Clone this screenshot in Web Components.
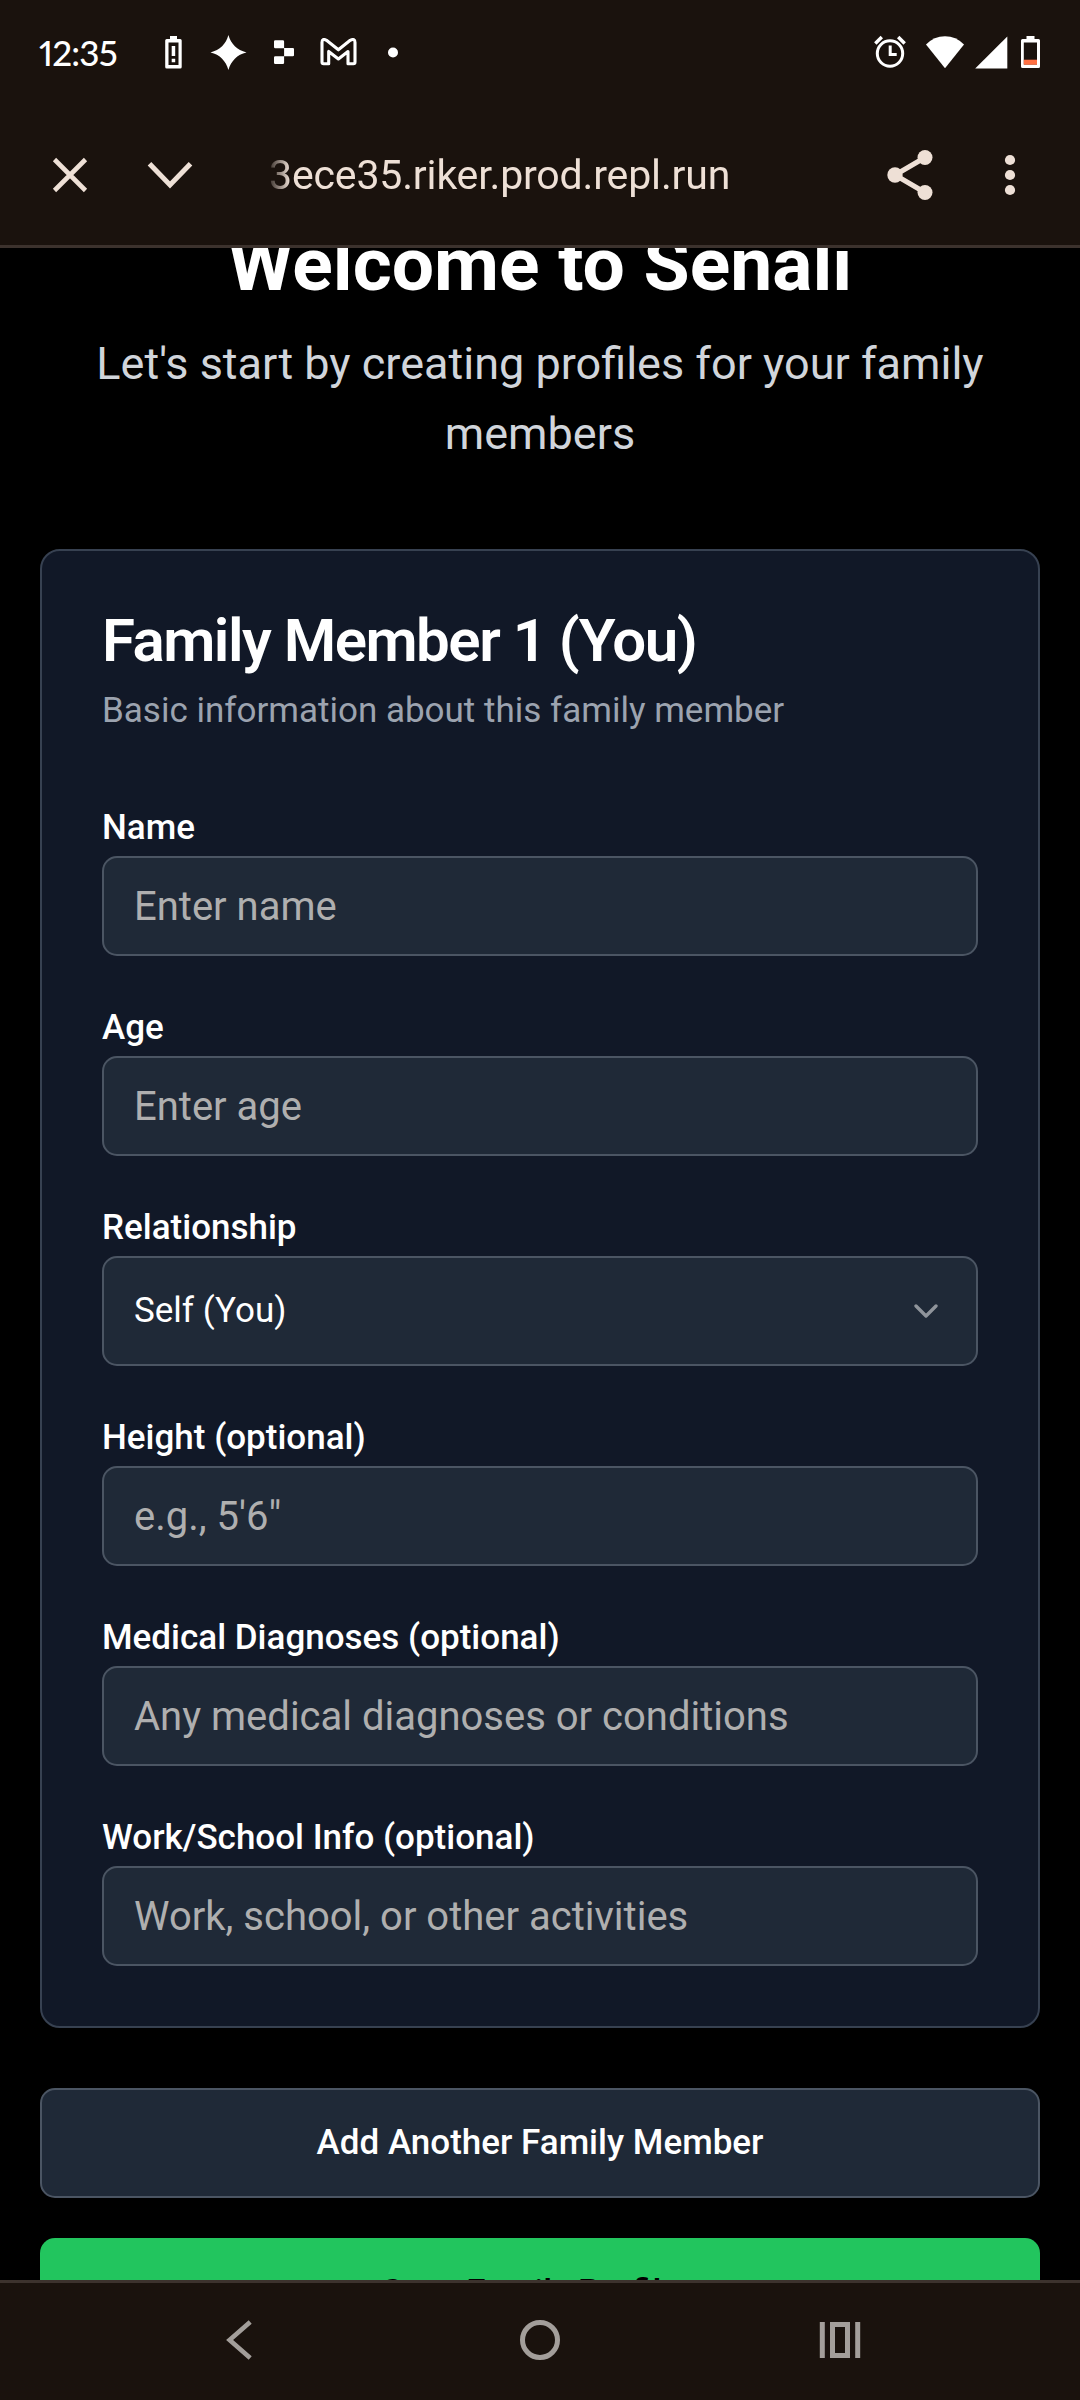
<!DOCTYPE html>
<html lang="en">
<head>
<meta charset="utf-8">
<title>Senali</title>
<style>
html,body{margin:0;padding:0;background:#000}
body{width:1080px;height:2400px;overflow:hidden;font-family:Roboto,sans-serif;-webkit-font-smoothing:antialiased}
</style>
</head>
<body>
<phone-screen>
  <status-bar slot="top" time="12:35"></status-bar>
  <browser-bar slot="top">3ece35.riker.prod.repl.run</browser-bar>
  <page-intro heading="Welcome to Senali">Let's start by creating profiles for your family members</page-intro>
  <member-card heading="Family Member 1 (You)" note="Basic information about this family member">
    <form-field label="Name" hint="Enter name"></form-field>
    <form-field label="Age" hint="Enter age"></form-field>
    <select-field label="Relationship">Self (You)</select-field>
    <form-field label="Height (optional)" hint="e.g., 5'6&quot;"></form-field>
    <form-field label="Medical Diagnoses (optional)" hint="Any medical diagnoses or conditions"></form-field>
    <form-field label="Work/School Info (optional)" hint="Work, school, or other activities"></form-field>
  </member-card>
  <action-button>Add Another Family Member</action-button>
  <action-button primary>Save Family Profiles</action-button>
  <nav-bar slot="bottom"></nav-bar>
</phone-screen>
<script>
const define = (name, html) => customElements.define(name, class extends HTMLElement {
  constructor() {
    super();
    this.attachShadow({ mode: 'open' }).innerHTML = html;
  }
  connectedCallback() {
    this.shadowRoot.querySelectorAll('[data-attr]').forEach(el => {
      el.textContent = this.getAttribute(el.dataset.attr) || '';
    });
  }
});

define('phone-screen', `
<style>
:host{display:flex;flex-direction:column;width:1080px;height:2400px;background:#000;overflow:hidden}
header{flex:none;height:245px;background:#1a120d;border-bottom:3px solid #3c322d}
main{flex:1;min-height:0;overflow:hidden;padding:0 40px;display:flex;flex-direction:column}
footer{flex:none}
</style>
<header><slot name="top"></slot></header>
<main><slot></slot></main>
<footer><slot name="bottom"></slot></footer>`);

define('status-bar', `
<style>
:host{display:flex;justify-content:space-between;height:104px;box-sizing:border-box;padding:0 40px 0 39px;color:#fff}
div{display:flex;align-items:center}
.time{font:500 35px/40px Lato,sans-serif;width:126px;font-variant-numeric:proportional-nums;letter-spacing:-.8px;white-space:nowrap}
svg{display:block;flex:none;fill:#fff}
</style>
<div>
  <span class="time" data-attr="time"></span>
  <svg width="17" height="34" viewBox="165 35 17 34"><path fill-rule="evenodd" d="M170 36h7v3h3.200a1.500 1.500 0 0 1 1.500 1.500v26.500a1.500 1.500 0 0 1-1.500 1.500h-13.500a1.500 1.500 0 0 1-1.500-1.500v-26.500a1.500 1.500 0 0 1 1.500-1.500h3.300zM168.500 42.500v22.500h10v-22.500z"/><path d="M171.700 46h3.500v10h-3.500zM171.700 58.700h3.500v3.500h-3.500z"/></svg>
  <svg style="margin-left:28px" width="37" height="36" viewBox="210 34 37 36"><path d="M228.400 35C231 44 237 50 246.500 52.400C237 54.500 231 61 228.400 70C226 61 220 54.500 210.500 52.400C220 50 226 44 228.400 35Z"/></svg>
  <svg style="margin-left:27px" width="20" height="24" viewBox="274 40 20 24"><path d="M275.300 40.300h7.500a1.300 1.300 0 0 1 1.300 1.300v6.500h8.700a1.300 1.300 0 0 1 1.300 1.300v5.500a1.300 1.300 0 0 1-1.300 1.300h-8.700v6.500a1.300 1.300 0 0 1-1.300 1.300h-7.500a1.300 1.300 0 0 1-1.300-1.300v-5.200a1.300 1.300 0 0 1 1.300-1.300h8.800v-8h-8.800a1.300 1.300 0 0 1-1.300-1.300v-5.300a1.300 1.300 0 0 1 1.300-1.300z"/></svg>
  <svg style="margin-left:26px" width="37" height="28" viewBox="320 38 37 28"><path d="M322 62V42.500Q322 38 326.500 40.300L338.400 49.800L350.200 40.300Q355 38 355 42.500V62Q355 63.700 353.300 63.700H348V51.500L338.400 59L328.700 51.500V63.700H323.700Q322 63.700 322 62Z" fill="none" stroke="#fff" stroke-width="3.100" stroke-linejoin="round"/></svg>
  <svg style="margin-left:31px" width="10" height="11" viewBox="0 0 10 11"><circle cx="5" cy="5.500" r="5"/></svg>
</div>
<div>
  <svg width="32" height="34" viewBox="874 36 32 34"><g fill="none" stroke="#fff"><circle cx="890" cy="54.500" r="12.700" stroke-width="3"/><path d="M890.200 46.500v9h6.500" stroke-width="3"/><path d="M875.300 44.500l6.500-6.500M904.700 44.500l-6.500-6.500" stroke-width="3.400"/></g></svg>
  <svg style="margin-left:20px" width="38" height="33" viewBox="926 35.500 38 33"><path d="M926 44Q934 35.700 945 35.700T964 44L945 67.800Z"/></svg>
  <svg style="margin-left:11px" width="33" height="33" viewBox="975 35.500 33 33"><path d="M975.200 68L1007.300 36V68Z"/></svg>
  <svg style="margin-left:13px" width="19" height="34" viewBox="1021 35.500 19 34"><path fill-rule="evenodd" d="M1026.500 36.500h8v3h4a1.500 1.500 0 0 1 1.500 1.500v26a1.500 1.500 0 0 1-1.500 1.500h-16a1.500 1.500 0 0 1-1.500-1.500v-26a1.500 1.500 0 0 1 1.500-1.500h4zM1023.800 43v22h13.200v-22z"/><path fill="#ff7043" d="M1023.800 60.200h13.200v5h-13.200z"/></svg>
</div>`);

define('browser-bar', `
<style>
:host{display:flex;align-items:center;height:141px;color:#eee0d6}
svg{flex:none;display:block;fill:none;stroke:#eee0d6}
.url{flex:1;margin-left:74px;font:400 41px/60px Roboto,sans-serif;letter-spacing:-.150px;white-space:nowrap;-webkit-mask-image:linear-gradient(90deg,rgba(0,0,0,.15),#000 21px)}
</style>
<svg style="margin-left:50px" width="40" height="40" viewBox="50 155 40 40"><path d="M54.500 159.500l31 31M85.500 159.500l-31 31" stroke-width="4.600"/></svg>
<svg style="margin-left:55px" width="50" height="40" viewBox="145 155 50 40"><path d="M149.500 163.700l20.500 21.300 20.500-21.300" stroke-width="5"/></svg>
<span class="url"><slot></slot></span>
<svg width="50" height="54" viewBox="885 148 50 54"><path d="M925 157.500L895 175L925 192.500" stroke-width="5"/><g fill="#eee0d6" stroke="none"><circle cx="895" cy="175" r="7.700"/><circle cx="925" cy="157.500" r="7.500"/><circle cx="925" cy="192.500" r="7.500"/></g></svg>
<svg style="margin:0 60px 0 65px" width="20" height="50" viewBox="1000 150 20 50"><g fill="#eee0d6" stroke="none"><circle cx="1010" cy="160" r="5.100"/><circle cx="1010" cy="175" r="5.100"/><circle cx="1010" cy="190" r="5.100"/></g></svg>`);

define('page-intro', `
<style>
:host{display:block;flex:none;margin:-29px 0 80px;text-align:center}
h1{margin:0 0 20px;font-weight:700;font-size:75px;line-height:90px;color:#fff}
p{margin:0;font-size:45px;line-height:70px;color:#d1d5db}
</style>
<h1 data-attr="heading"></h1><p><slot></slot></p>`);

define('member-card', `
<style>
:host{display:flex;flex-direction:column;flex:none;box-sizing:border-box;border:2px solid #374151;border-radius:20px;background:#111827;padding:60px;margin-bottom:60px}
h2{margin:0 0 15px;font-weight:600;font-size:60px;line-height:60px;letter-spacing:-1.5px;color:#fff}
p{margin:0 0 60px;font-size:35px;line-height:50px;color:#9ca3af}
.fields{display:flex;flex-direction:column;gap:40px}
</style>
<h2 data-attr="heading"></h2><p data-attr="note"></p><div class="fields"><slot></slot></div>`);

const fieldStyle = `
:host{display:block;color:#fff}
label{display:block;box-sizing:border-box;height:60px;padding-top:2px;font-weight:500;font-size:35px;line-height:60px}
.box{display:flex;align-items:center;justify-content:space-between;box-sizing:border-box;border:2px solid #4b5563;border-radius:15px;background:#1f2937;padding:0 30px}`;

define('form-field', `
<style>${fieldStyle}
.box{height:100px;padding-top:2px;font-size:40px;line-height:60px;color:#afafaf}
</style>
<label data-attr="label"></label><div class="box"><span data-attr="hint"></span></div>`);

define('select-field', `
<style>${fieldStyle}
.box{height:110px;font-size:35px;line-height:50px}
svg{opacity:.5}
</style>
<label data-attr="label"></label>
<div class="box"><span><slot></slot></span><svg width="40" height="40" viewBox="0 0 24 24" fill="none" stroke="#fff" stroke-width="2" stroke-linecap="round" stroke-linejoin="round"><path d="m6 9 6 6 6-6"/></svg></div>`);

define('action-button', `
<style>
:host{display:flex;flex:none;align-items:center;justify-content:center;box-sizing:border-box;height:110px;margin-bottom:40px;border:2px solid #4b5563;border-radius:15px;background:#1f2937;color:#fff;font-weight:500;font-size:35px;line-height:50px}
:host([primary]){border:0;background:#22c55e;color:#000}
</style>
<slot></slot>`);

define('nav-bar', `
<style>
:host{display:flex;align-items:center;justify-content:space-between;box-sizing:border-box;height:120px;padding:0 219px 0 219px;background:#1a120d;border-top:3px solid #3c322d}
svg{display:block;fill:none;stroke:#a39e9a;margin-bottom:3px}
</style>
<svg width="42" height="42" viewBox="219 2319 42 42"><path d="M250.200 2322L229.600 2340L250.200 2358" stroke-width="4.600"/></svg>
<svg width="42" height="42" viewBox="519 2319 42 42"><circle cx="540" cy="2340" r="17.500" stroke-width="5"/></svg>
<svg width="42" height="42" viewBox="819 2319 42 42"><path d="M822.300 2322v36M857.700 2322v36" stroke-width="5"/><path d="M832.500 2324.500h15v31h-15z" stroke-width="5"/></svg>`);
</script>
</body>
</html>
